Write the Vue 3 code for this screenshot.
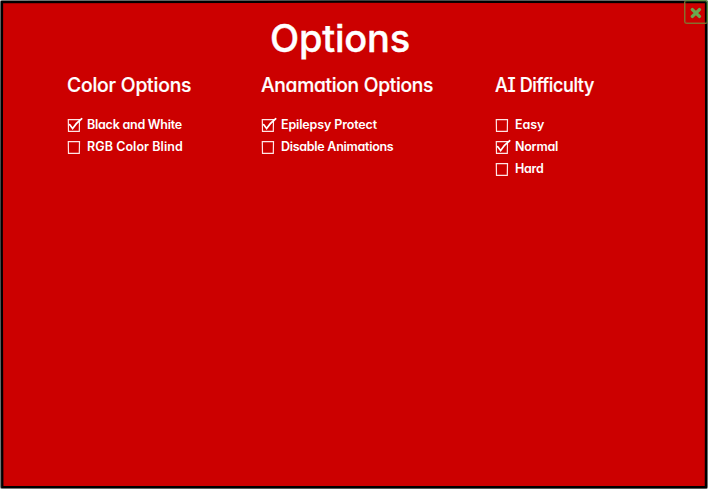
<script setup>
const groups = [
  {
    title: 'Color Options', cls: 'color',
    items: [
      { label: 'Black and White', on: true, track: -0.24 },
      { label: 'RGB Color Blind', on: false, track: 0.06 },
    ],
  },
  {
    title: 'Anamation Options', cls: 'animation',
    items: [
      { label: 'Epilepsy Protect', on: true, track: -0.14 },
      { label: 'Disable Animations', on: false, track: -0.28 },
    ],
  },
  {
    title: 'AI Difficulty', cls: 'difficulty',
    items: [
      { label: 'Easy', on: false, track: -0.1 },
      { label: 'Normal', on: true, track: -0.25 },
      { label: 'Hard', on: false, track: -0.25 },
    ],
  },
]
</script>

<template>
  <main class="window">
    <svg class="frame" viewBox="0 0 708 489" aria-hidden="true">
      <path class="halo" d="M2 2 L706 2 L706 487 L2 487 Z" />
      <path class="edge" d="M2 2.2 L350 1.7 L706 2.2 L706.3 240 L705.9 487 L350 487.2 L2.3 486.8 L1.7 240 Z" />
    </svg>
    <button class="close" aria-label="Close">
      <svg viewBox="0 0 12 12"><path d="M2.4 2.6 L9.4 9.4 M9.4 2.6 L2.4 9.4" /></svg>
    </button>
    <h1>Options</h1>
    <div class="groups">
      <section v-for="g in groups" :key="g.title" :class="g.cls">
        <h2>{{ g.title }}</h2>
        <ul>
          <li v-for="item in g.items" :key="item.label">
            <svg class="box" viewBox="0 0 16 16">
              <path class="outline" d="M1.3 2.6 L12.5 2.5 L12.3 14.4 L1.5 14.3 Z" />
              <path v-if="item.on" class="tick" d="M2.6 7.6 L5.6 11.6 Q9 6 14.7 1.7" />
            </svg>
            <span :style="{ letterSpacing: item.track + 'px' }">{{ item.label }}</span>
          </li>
        </ul>
      </section>
    </div>
  </main>
</template>

<style>
body { background: #fff; }
</style>

<style scoped>
.window {
  position: relative;
  box-sizing: border-box;
  width: 708px;
  height: 489px;
  padding-top: 15px;
  overflow: hidden;
  color: #fff;
  font-family: Inter, "Liberation Sans", sans-serif;
  font-feature-settings: "cv11", "ss07";
}
.frame { position: absolute; inset: 0; width: 708px; height: 489px; z-index: -1; }
.halo { fill: none; stroke: #777; stroke-width: 4; stroke-linejoin: round; }
.edge { fill: #c00; stroke: #000; stroke-width: 2.3; }
.close {
  position: absolute;
  top: 0;
  left: 684px;
  display: grid;
  place-items: center;
  box-sizing: border-box;
  width: 24px;
  height: 24px;
  padding: 2px 1px 0 0;
  border: 1px solid #85702c;
  border-top-color: #5b8f45;
  border-right-color: #5b8f45;
  border-radius: 3px;
  box-shadow: inset 0 0 0 1px rgba(106, 168, 79, 0.3);
  background: none;
}
.close svg { width: 12px; height: 12px; }
.close path { fill: none; stroke: #6aa84f; stroke-width: 3.4; stroke-linecap: round; }
h1 {
  margin: 0 0 0 270px;
  height: 46px;
  font-size: 38px;
  line-height: 46px;
  font-weight: 500;
  letter-spacing: -0.2px;
  -webkit-text-stroke: 0.4px #fff;
}
.groups { display: flex; padding: 12px 0 0 67px; }
h2 {
  margin: 0;
  font-size: 20px;
  line-height: 24px;
  font-weight: 500;
  white-space: nowrap;
  -webkit-text-stroke: 0.2px #fff;
  transform-origin: left center;
}
.color { width: 194px; }
.color h2 { letter-spacing: -0.2px; transform: scaleX(0.965); }
.animation { width: 234px; }
.animation h2 { letter-spacing: -0.3px; transform: scaleX(0.96); }
.difficulty h2 { font-feature-settings: "cv11", "cv08", "ss07"; letter-spacing: -0.4px; transform: scaleX(0.9); }
ul { margin: 0; padding: 17px 0 0; list-style: none; }
li { display: flex; align-items: center; gap: 4px; height: 22px; font-size: 12.5px; font-weight: 600; white-space: nowrap; }
li span { line-height: 22px; }
.box { width: 16px; height: 16px; }
.outline { fill: none; stroke: #ffe6e6; stroke-width: 1.2; }
.tick { fill: none; stroke: #fff; stroke-width: 1.7; stroke-linecap: round; }
</style>
